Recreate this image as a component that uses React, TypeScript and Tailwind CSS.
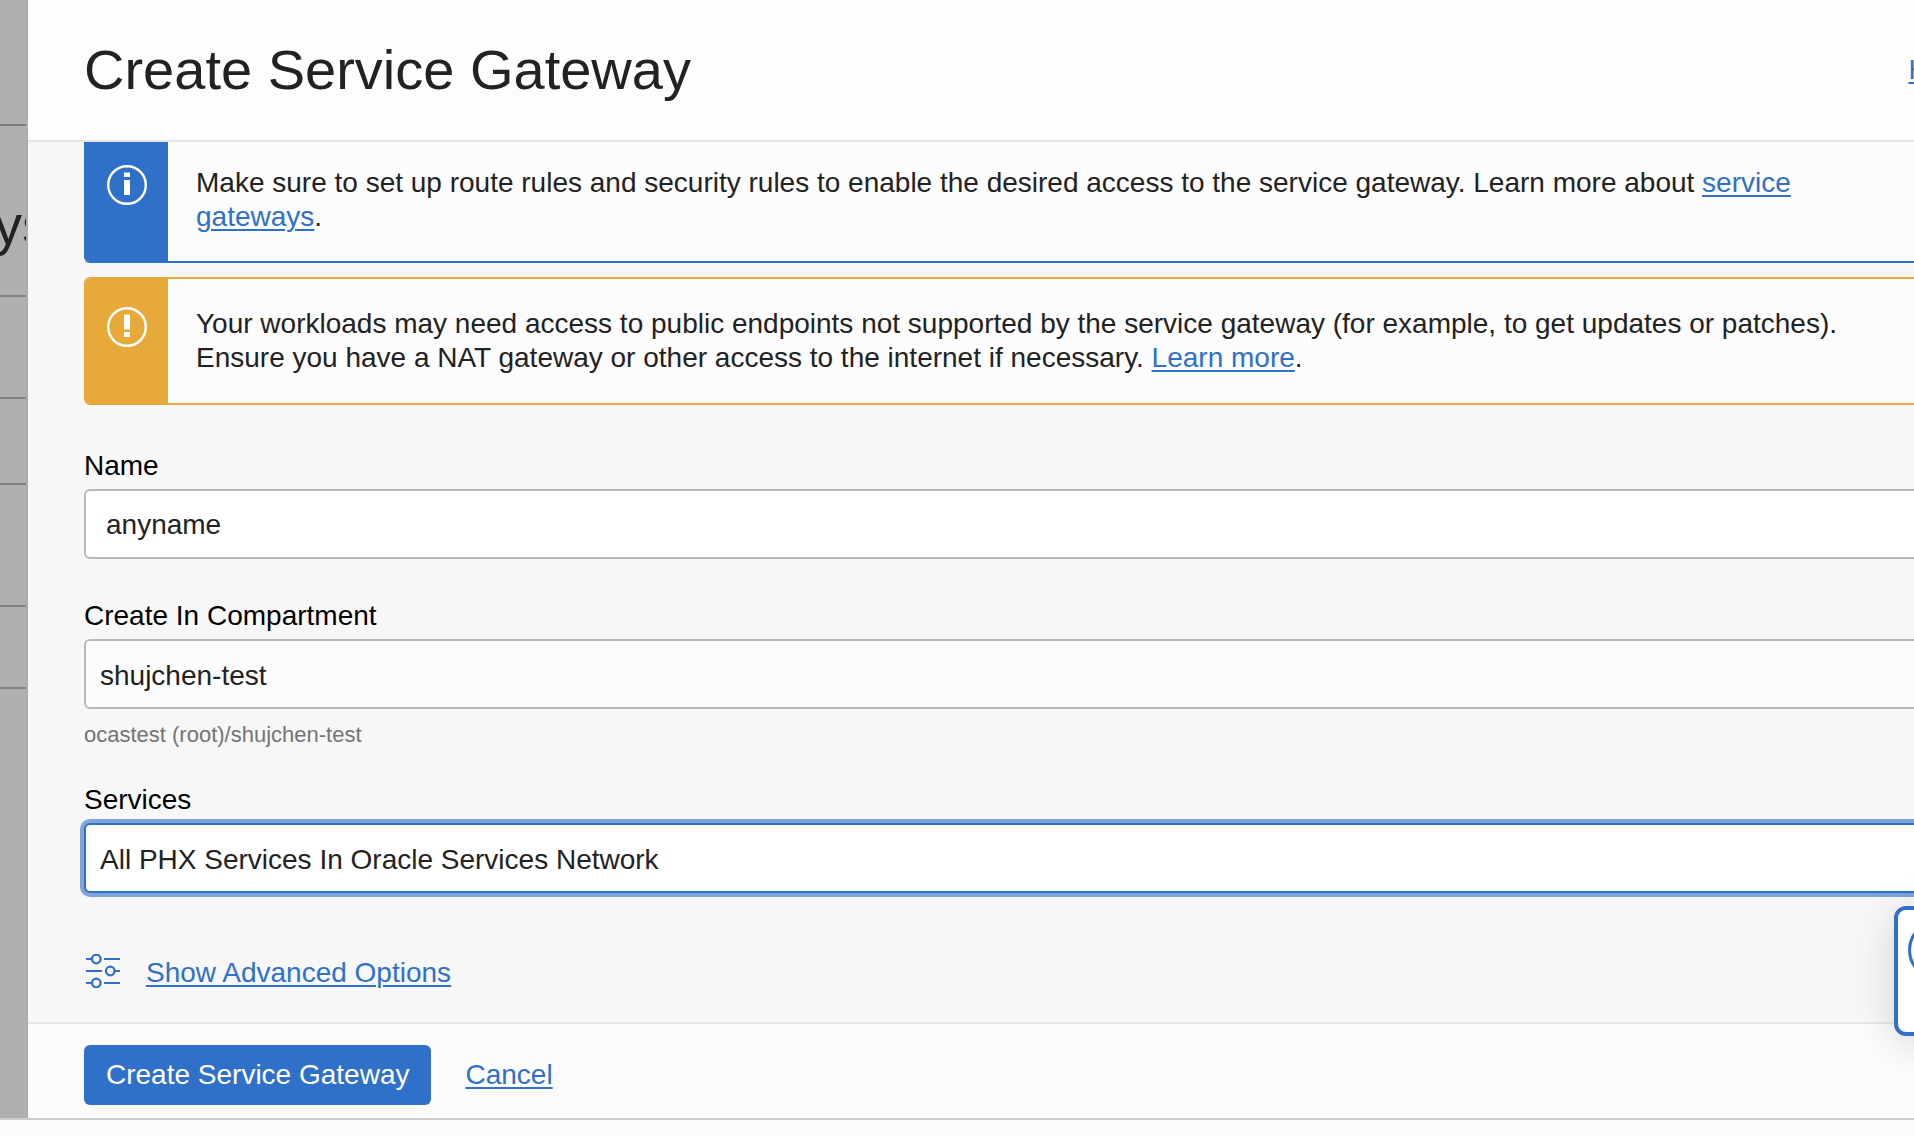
import React, { useState } from "react";

const linkClass =
  "text-[#2f70c8] underline decoration-2 underline-offset-3 cursor-pointer";

function InfoIcon() {
  return (
    <svg viewBox="0 0 40 40" className="size-10" fill="none" aria-hidden="true">
      <circle cx="20" cy="20" r="18.8" stroke="white" strokeWidth="2.4" />
      <path d="M17 7.5h6v4.5h-6zM17 15h6v15h-6z" fill="white" />
    </svg>
  );
}

function WarningIcon() {
  return (
    <svg viewBox="0 0 40 40" className="size-10" fill="none" aria-hidden="true">
      <circle cx="20" cy="20" r="18.8" stroke="white" strokeWidth="2.4" />
      <path d="M17 7.5h6v15h-6zM17 25h6v5h-6z" fill="white" />
    </svg>
  );
}

function SlidersIcon() {
  return (
    <svg viewBox="0 0 34 34" className="size-[34px]" fill="none" stroke="#2f70c8" strokeWidth="2" aria-hidden="true">
      <path d="M0 5h6M18 5h16M0 17h16M28 17h6M0 29h6M18 29h16" />
      <circle cx="10.3" cy="5" r="4.3" strokeWidth="2.3" />
      <circle cx="24.3" cy="17" r="4.3" strokeWidth="2.3" />
      <circle cx="10.3" cy="29" r="4.3" strokeWidth="2.3" />
    </svg>
  );
}

function Backdrop() {
  return (
    <div className="w-7 shrink-0 overflow-hidden border-r-2 border-[#acacac] bg-[#b0b0b0]" aria-hidden="true">
      <div className="h-[126px] border-b-2 border-[#7b7b7b]" />
      <div className="flex h-[171px] items-center justify-end border-b-2 border-[#7d8285] pt-7">
        <span className="-mr-6 text-[56px] leading-[64px] text-[#222222]">ys</span>
      </div>
      <div className="h-[102px] border-b-2 border-[#7d8285]" />
      <div className="h-[86px] border-b-2 border-[#7d8285]" />
      <div className="h-[122px] border-b-2 border-[#7d8285]" />
      <div className="h-[82px] border-b-2 border-[#7d8285]" />
    </div>
  );
}

export default function App() {
  const [name, setName] = useState("anyname");
  return (
    <div className="relative flex min-h-screen flex-col overflow-hidden bg-[#fcfcfc] font-['Liberation_Sans',Arial,sans-serif] text-[28px] leading-[34px] text-[#222222]">
      <div className="flex border-b-2 border-[#cccccc]">
        <Backdrop />
        <main className="-mr-[108px] min-w-0 flex-1 bg-[#f7f7f7]">
          <header className="flex h-[142px] items-center justify-between border-b-2 border-[#e6e6e6] bg-[#fdfdfd] px-14">
            <h1 className="text-[56px] leading-[64px]">Create Service Gateway</h1>
            <a href="#help" className={linkClass}>Help</a>
          </header>

          <div className="px-14">
            <section className="flex overflow-hidden rounded-b-md border-b-2 border-[#2f70c8] bg-[#fcfcfc]">
              <div className="flex w-21 shrink-0 justify-center bg-[#2f70c8] pt-[23px] pl-0.5">
                <InfoIcon />
              </div>
              <p className="pt-6 pr-16 pb-[27px] pl-7">
                Make sure to set up route rules and security rules to enable the desired access to the service
                gateway. Learn more about <a href="#gateways" className={linkClass}>service gateways</a>.
              </p>
            </section>

            <section className="mt-3.5 flex overflow-hidden rounded-md border-y-2 border-[#e8a93b] bg-[#fcfcfc]">
              <div className="flex w-21 shrink-0 justify-center bg-[#e8a93b] pt-7 pl-0.5">
                <WarningIcon />
              </div>
              <p className="py-7 pr-16 pl-7">
                Your workloads may need access to public endpoints not supported by the service gateway (for
                example, to get updates or patches). Ensure you have a NAT gateway or other access to the
                internet if necessary. <a href="#nat" className={linkClass}>Learn more</a>.
              </p>
            </section>

            <form onSubmit={(e) => e.preventDefault()}>
              <label htmlFor="name" className="mt-11 block text-black">Name</label>
              <input
                id="name"
                value={name}
                onChange={(e) => setName(e.target.value)}
                className="mt-1.5 block h-[70px] w-full rounded-md border-2 border-[#b5b9bf] bg-white px-5 pt-0.5 outline-none"
              />

              <label htmlFor="compartment" className="mt-10 block text-black">Create In Compartment</label>
              <select
                id="compartment"
                className="mt-1.5 block h-[70px] w-full appearance-none rounded-md border-2 border-[#b5b9bf] bg-[#fcfcfc] px-3.5 pt-1 outline-none"
              >
                <option>shujchen-test</option>
              </select>
              <p className="mt-3 text-[22px] leading-7 text-[#747474]">ocastest (root)/shujchen-test</p>

              <label htmlFor="services" className="mt-[34px] block text-black">Services</label>
              <select
                id="services"
                className="mt-1.5 block h-[70px] w-full appearance-none rounded-md border-2 border-[#2f70c8] bg-white px-3.5 pt-1 ring-4 ring-[#7fa4db] outline-none"
              >
                <option>All PHX Services In Oracle Services Network</option>
              </select>
            </form>

            <div className="mt-[61px] flex items-start gap-6 pb-8">
              <div className="px-0.5">
                <SlidersIcon />
              </div>
              <a href="#advanced" className={`${linkClass} pt-0.5`}>Show Advanced Options</a>
            </div>
          </div>

          <footer className="flex items-center gap-[34px] border-t-2 border-[#e6e6e6] bg-[#fcfcfc] px-14 pt-[21px] pb-[13px]">
            <button type="button" className="h-15 rounded-md bg-[#2f70c8] px-[22px] text-white">
              Create Service Gateway
            </button>
            <a href="#cancel" className={linkClass}>Cancel</a>
          </footer>
        </main>
      </div>

      <aside className="absolute top-[906px] -right-[110px] h-[130px] w-[130px] rounded-xl border-4 border-[#2f70c8] bg-white pt-2.5 pl-2.5 shadow-[0_8px_44px_rgba(0,0,0,0.14)]">
        <svg viewBox="0 0 60 60" className="size-15" fill="none" aria-hidden="true">
          <circle cx="30" cy="30" r="28.5" stroke="#2f70c8" strokeWidth="3" />
        </svg>
      </aside>
    </div>
  );
}
